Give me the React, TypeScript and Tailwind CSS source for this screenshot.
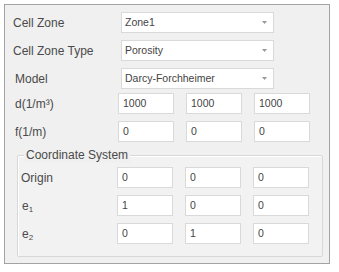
import React from "react";

const font = { fontFamily: '"Liberation Sans", Arial, sans-serif' };

function Select({ value }: { value: string }) {
  return (
    <div className="ml-[3px] flex h-[21px] w-[153px] items-center justify-between border border-[#d9d9d9] bg-white pl-[3px] pr-[6px]">
      <span className="text-[10.5px] text-[#444]">{value}</span>
      <svg width="5" height="3" viewBox="0 0 5 3">
        <path d="M0 0 L5 0 L2.5 3 Z" fill="#999999" />
      </svg>
    </div>
  );
}

function Box({ value }: { value: string }) {
  return (
    <div className="flex h-[21px] w-[56px] items-center border border-[#d9d9d9] bg-white pl-[4px] text-[10.5px] text-[#444]">
      {value}
    </div>
  );
}

function Triple({ values }: { values: string[] }) {
  return (
    <div className="flex gap-[12px]">
      {values.map((v, i) => (
        <Box key={i} value={v} />
      ))}
    </div>
  );
}

export default function App() {
  return (
    <div className="h-[272px] w-[339px] bg-white pl-[4px] pt-[4px]" style={font}>
      <div className="flex h-[260px] w-[326px] flex-col border border-[#a3a3a3] bg-[#f0f0f0] pt-[7px] text-[12px] text-[#4a4a4a]">
        <div className="flex h-[21px] items-center">
          <div className="w-[113px] pl-[8px]">Cell Zone</div>
          <Select value="Zone1" />
        </div>
        <div className="mt-[7px] flex h-[21px] items-center">
          <div className="w-[113px] pl-[8px]">Cell Zone Type</div>
          <Select value="Porosity" />
        </div>
        <div className="mt-[7px] flex h-[21px] items-center">
          <div className="w-[113px] pl-[10px]">Model</div>
          <Select value="Darcy-Forchheimer" />
        </div>
        <div className="mt-[4px] flex h-[21px] items-center">
          <div className="w-[113px] pl-[10px]">d(1/m³)</div>
          <Triple values={["1000", "1000", "1000"]} />
        </div>
        <div className="mt-[7px] flex h-[21px] items-center">
          <div className="w-[113px] pl-[10px]">f(1/m)</div>
          <Triple values={["0", "0", "0"]} />
        </div>
        <div className="relative ml-[12px] mr-[6px] mt-[13px] flex flex-col rounded-[2px] border border-[#d8d8d8] bg-[#f2f2f2] pb-[12px] pt-[11px] shadow-[inset_1px_1px_0_#ffffff]">
          <div className="absolute left-[6px] top-[-9px] bg-[#f0f0f0] px-[2px] leading-[16px]">
            Coordinate System
          </div>
          <div className="flex h-[21px] items-center">
            <div className="w-[99px] pl-[3px]">Origin</div>
            <Triple values={["0", "0", "0"]} />
          </div>
          <div className="mt-[7px] flex h-[21px] items-center">
            <div className="w-[99px] pl-[4px]">
              e<sub className="text-[8px]">1</sub>
            </div>
            <Triple values={["1", "0", "0"]} />
          </div>
          <div className="mt-[7px] flex h-[21px] items-center">
            <div className="w-[99px] pl-[4px]">
              e<sub className="text-[8px]">2</sub>
            </div>
            <Triple values={["0", "1", "0"]} />
          </div>
        </div>
      </div>
    </div>
  );
}
